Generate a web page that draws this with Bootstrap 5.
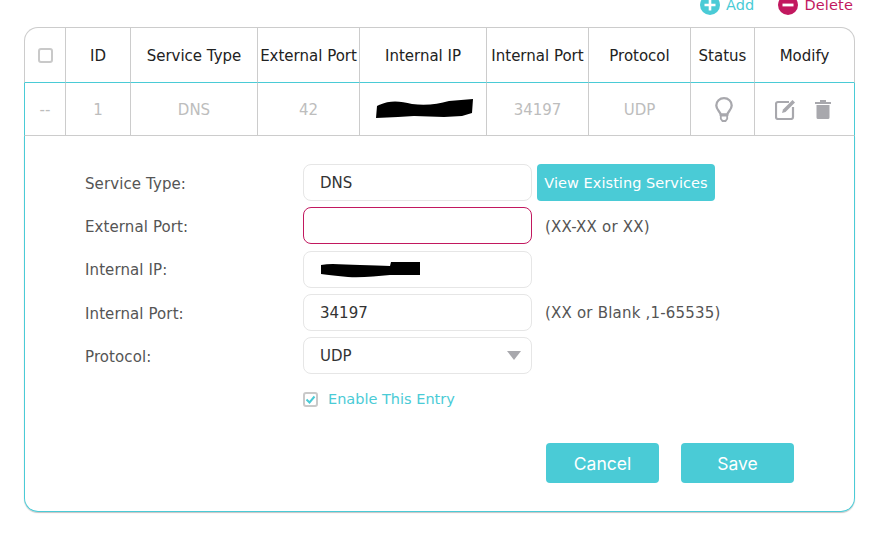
<!DOCTYPE html>
<html lang="en">
<head>
<meta charset="utf-8">
<title>Port Forwarding</title>
<link rel="stylesheet" href="https://cdn.jsdelivr.net/npm/bootstrap@5.3.0/dist/css/bootstrap.min.css">
<style>
:root { --teal:#4acbd6; --pink:#c2185f; --line:#cccccc; }
html, body { height:100%; overflow:hidden; background:#fff; }
body { font-family:"DejaVu Sans","Liberation Sans",sans-serif; font-size:14px; color:#333; padding:0 20px 0 24px; }
.tool-row { height:32px; margin-top:-5px; padding-right:2px; gap:24px; font-size:14.5px; letter-spacing:.15px; }
.tool-link { color:var(--teal); text-decoration:none; gap:6px; line-height:20px; height:20px; }
.tool-link.danger { color:var(--pink); }
.rule-table { width:831px; table-layout:fixed; border-collapse:separate; border-spacing:0; margin:0; font-size:15px; }
.rule-table > * > tr > * { padding:0; border:0; border-right:1px solid var(--line); text-align:center; vertical-align:middle; font-weight:400; box-shadow:none; background:transparent; }
.rule-table thead th { height:56px; color:#222; border-top:1px solid var(--line); border-bottom:1px solid var(--teal); }
.rule-table thead th:not(:first-child), .rule-table tbody td.txt-cell { padding-top:2px; }
.rule-table thead th:first-child { border-left:1px solid var(--line); border-top-left-radius:14px; }
.rule-table thead th:last-child { border-top-right-radius:14px; }
.rule-table tbody .data-row td { height:53px; color:#bdbdbd; border-bottom:1px solid var(--line); }
.rule-table tbody .data-row td:first-child { border-left:1px solid var(--teal); }
.rule-table tbody .data-row td:last-child { border-right:1px solid var(--teal); }
.rule-table tbody td.edit-cell { text-align:left; height:376px; vertical-align:top; border:1px solid var(--teal); border-top:0; border-radius:0 0 14px 14px; box-shadow:0 1px 1px #c4c4c4; padding:28px 0 0 60px; letter-spacing:.1px; }
.tick { appearance:none; width:15px; height:15px; margin:0; border:2px solid #c9c9c9; border-radius:3px; background:#fff; display:block; }
.tick:checked { background:#fff url("data:image/svg+xml,%3Csvg xmlns='http://www.w3.org/2000/svg' viewBox='0 0 11 11'%3E%3Cpath d='M1.5 5.5l3 3 5-6' fill='none' stroke='%234acbd6' stroke-width='2'/%3E%3C/svg%3E") center/11px no-repeat; }
.field-row { height:37px; margin-bottom:6.3px; }
.field-label { width:218px; color:#555; flex:none; padding-top:3px; }
.field-box { width:229px; height:37px; flex:none; border:1px solid #e6e6e6; border-radius:8px; padding:1px 16px 0; font-size:15px; color:#333; box-shadow:none; background-color:#fff; }
.field-box.bad { border-color:var(--pink); }
.field-box.pick { padding-top:2px; background-image:url("data:image/svg+xml,%3Csvg xmlns='http://www.w3.org/2000/svg' viewBox='0 0 14 9'%3E%3Cpath d='M0 0h14l-7 9z' fill='%23a8a8ad'/%3E%3C/svg%3E"); background-size:14px 9px; background-position:right 10px center; }
.hint { color:#555; margin-left:13px; letter-spacing:.2px; padding-top:2px; }
.view-btn { width:178px; height:37px; margin-left:5px; padding:2px 0 0; border:0; border-radius:4px; background:var(--teal); color:#fff; font-size:14.5px; letter-spacing:.05px; }
.mask-box svg { margin:1px 0 0 -1px; }
.ip-mask { position:relative; left:2px; }
.enable-row { margin:15px 0 0 218px; gap:10px; color:var(--teal); height:20px; font-size:14.5px; letter-spacing:0; }
.enable-text { padding-top:2px; }
.action-row { margin:34px 0 0 461px; gap:22px; }
.act-btn { width:113px; height:40px; padding:2px 0 0; border:0; border-radius:4px; background:var(--teal); color:#fff; font-family:"Inter","Liberation Sans",sans-serif; font-size:17.5px; letter-spacing:0; }
.act-btn:hover { background:var(--teal); color:#fff; }
.mod-cell { gap:19px; padding-right:3px; }
.bulb-icon { position:relative; left:1px; }
</style>
</head>
<body>
<div class="tool-row d-flex justify-content-end">
  <a class="tool-link d-flex" href="#">
    <svg width="20" height="20" viewBox="0 0 20 20"><circle cx="10" cy="10" r="10" fill="#4acbd6"/><path d="M10 4.5v11M4.5 10h11" stroke="#fff" stroke-width="2.6"/></svg>Add</a>
  <a class="tool-link danger d-flex" href="#">
    <svg width="20" height="20" viewBox="0 0 20 20"><circle cx="10" cy="10" r="10" fill="#c2185f"/><path d="M4.5 10h11" stroke="#fff" stroke-width="2.8"/></svg>Delete</a>
</div>
<table class="table rule-table">
  <colgroup>
    <col style="width:42px"><col style="width:65px"><col style="width:127px"><col style="width:102px"><col style="width:127px"><col style="width:102px"><col style="width:102px"><col style="width:64px"><col style="width:100px">
  </colgroup>
  <thead>
    <tr>
      <th><input class="tick mx-auto" type="checkbox" aria-label="Select all"></th>
      <th>ID</th><th>Service Type</th><th>External Port</th><th>Internal IP</th><th>Internal Port</th><th>Protocol</th><th>Status</th><th>Modify</th>
    </tr>
  </thead>
  <tbody>
    <tr class="data-row">
      <td class="txt-cell">--</td><td class="txt-cell">1</td><td class="txt-cell">DNS</td><td class="txt-cell">42</td>
      <td><svg class="ip-mask d-block mx-auto" width="98" height="20" viewBox="0 0 98 20"><path d="M3 6C14 1 24 2 36 5c14 2 26 0 37-3l24-2-1 14-10 3-18 1-30-1-16 1-22 1L0 19 1 7z" fill="#000"/></svg></td>
      <td class="txt-cell">34197</td><td class="txt-cell">UDP</td>
      <td><svg class="bulb-icon d-block mx-auto" width="18" height="25" viewBox="0 0 18 25"><path d="M5.6 17.5C5.4 14.5 1.3 12.8 1.3 8.5 1.3 4.2 4.7 1.2 9 1.2s7.700 3 7.700 7.300c0 4.300-4.100 6-4.300 9z" fill="none" stroke="#a8a8ad" stroke-width="2.300"/><path d="M5.800 18.500h6.400v3.200L10.500 24h-3L5.800 21.700z" fill="none" stroke="#a8a8ad" stroke-width="1.800"/></svg></td>
      <td><div class="mod-cell d-flex justify-content-center">
        <svg width="21" height="21" viewBox="0 0 21 21"><path d="M14 3H3a2 2 0 0 0-2 2v13a2 2 0 0 0 2 2h13a2 2 0 0 0 2-2V8" fill="none" stroke="#a8a8ad" stroke-width="2.200"/><path d="M7 14l1-3.500L17.500 1l2.500 2.500L10.500 13z" fill="#a8a8ad"/></svg>
        <svg width="16" height="20" viewBox="0 0 16 20"><path d="M0 3h16v2H0zM5 1h6v2H5zM1.500 6h13v12.500A1.500 1.500 0 0 1 13 20H3a1.500 1.500 0 0 1-1.500-1.500z" fill="#a8a8ad"/></svg>
      </div></td>
    </tr>
    <tr>
      <td class="edit-cell" colspan="9">
        <form>
          <div class="field-row d-flex align-items-center">
            <label class="field-label" for="f1">Service Type:</label>
            <input class="form-control field-box" id="f1" value="DNS">
            <button type="button" class="btn view-btn">View Existing Services</button>
          </div>
          <div class="field-row d-flex align-items-center">
            <label class="field-label" for="f2">External Port:</label>
            <input class="form-control field-box bad" id="f2">
            <span class="hint">(XX-XX or XX)</span>
          </div>
          <div class="field-row d-flex align-items-center">
            <label class="field-label" for="f3">Internal IP:</label>
            <div class="form-control field-box d-flex align-items-center" id="f3">
              <svg width="100" height="16" viewBox="0 0 100 16"><path d="M1 3C12 1 25 3 40 3c12 0 22 1 30 1l1-4 29 0 0 13-30 0c-14 1-28 3-42 2C18 14 8 13 1 12z" fill="#000"/></svg>
            </div>
          </div>
          <div class="field-row d-flex align-items-center">
            <label class="field-label" for="f4">Internal Port:</label>
            <input class="form-control field-box" id="f4" value="34197">
            <span class="hint">(XX or Blank ,1-65535)</span>
          </div>
          <div class="field-row d-flex align-items-center">
            <label class="field-label" for="f5">Protocol:</label>
            <select class="form-select field-box pick" id="f5"><option>UDP</option></select>
          </div>
          <label class="enable-row d-flex align-items-center">
            <input class="tick" type="checkbox" checked><span class="enable-text">Enable This Entry</span>
          </label>
          <div class="action-row d-flex">
            <button type="button" class="btn act-btn">Cancel</button>
            <button type="button" class="btn act-btn">Save</button>
          </div>
        </form>
      </td>
    </tr>
  </tbody>
</table>
<script src="https://cdn.jsdelivr.net/npm/bootstrap@5.3.0/dist/js/bootstrap.bundle.min.js"></script>
</body>
</html>
